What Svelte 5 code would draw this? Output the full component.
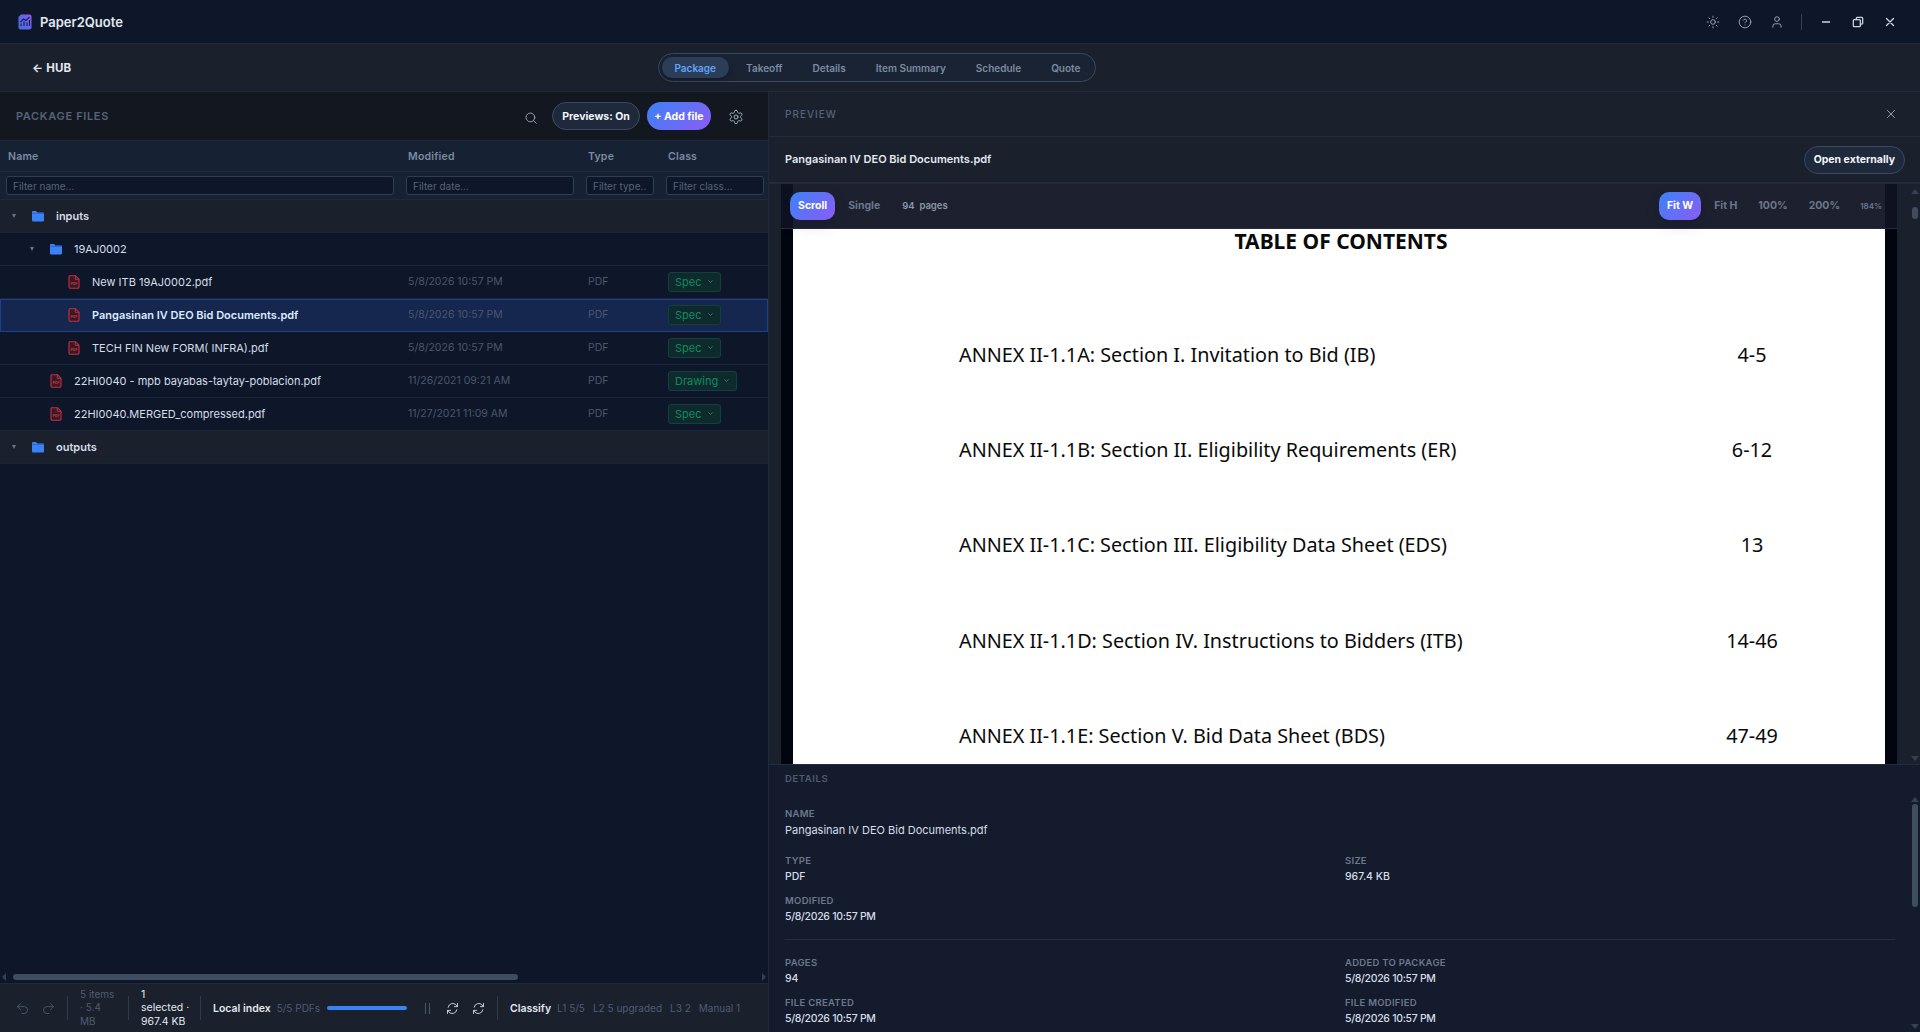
<script lang="ts">
    type FileRow = {
        kind: 'folder' | 'file'
        depth: number
        name: string
        modified?: string
        cls?: string
        selected?: boolean
        top?: boolean
    }

    const tabs = ['Package', 'Takeoff', 'Details', 'Item Summary', 'Schedule', 'Quote']

    const rows: FileRow[] = [
        { kind: 'folder', depth: 0, name: 'inputs', top: true },
        { kind: 'folder', depth: 1, name: '19AJ0002' },
        { kind: 'file', depth: 2, name: 'New ITB 19AJ0002.pdf', modified: '5/8/2026 10:57 PM', cls: 'Spec' },
        { kind: 'file', depth: 2, name: 'Pangasinan IV DEO Bid Documents.pdf', modified: '5/8/2026 10:57 PM', cls: 'Spec', selected: true },
        { kind: 'file', depth: 2, name: 'TECH FIN New FORM( INFRA).pdf', modified: '5/8/2026 10:57 PM', cls: 'Spec' },
        { kind: 'file', depth: 1, name: '22HI0040 - mpb bayabas-taytay-poblacion.pdf', modified: '11/26/2021 09:21 AM', cls: 'Drawing' },
        { kind: 'file', depth: 1, name: '22HI0040.MERGED_compressed.pdf', modified: '11/27/2021 11:09 AM', cls: 'Spec' },
        { kind: 'folder', depth: 0, name: 'outputs', top: true }
    ]

    const contents = [
        ['ANNEX II-1.1A: Section I. Invitation to Bid (IB)', '4-5'],
        ['ANNEX II-1.1B: Section II. Eligibility Requirements (ER)', '6-12'],
        ['ANNEX II-1.1C: Section III. Eligibility Data Sheet (EDS)', '13'],
        ['ANNEX II-1.1D: Section IV. Instructions to Bidders (ITB)', '14-46'],
        ['ANNEX II-1.1E: Section V. Bid Data Sheet (BDS)', '47-49']
    ]

    let activeTab = $state('Package')
</script>

<div class="app">
    <header class="titlebar">
        <div class="brand">
            <svg class="logo" viewBox="0 0 14 16" width="14" height="16">
                <defs>
                    <linearGradient id="logoFill" x1="1" y1="0" x2="0" y2="1">
                        <stop offset="0" stop-color="#8b5cf6" />
                        <stop offset="1" stop-color="#3b6fe0" />
                    </linearGradient>
                </defs>
                <path d="M3 .5h8.5a2 2 0 0 1 2 2v11a2 2 0 0 1-2 2h-9a2 2 0 0 1-2-2V3z" fill="url(#logoFill)" />
                <path d="M3 12V9.5M6 12V7.5M9 12V8.5M11.5 12V6M2.5 8l3-3 2.5 1.5L11.5 3" stroke="#13204a" stroke-width="1.1" fill="none" />
            </svg>
            <span>Paper2Quote</span>
        </div>
        <div class="win">
            <svg class="ico" viewBox="0 0 24 24"><circle cx="12" cy="12" r="4" /><path d="M12 2v2M12 20v2M4.9 4.9l1.4 1.4M17.7 17.7l1.4 1.4M2 12h2M20 12h2M4.9 19.1l1.4-1.4M17.7 6.3l1.4-1.4" /></svg>
            <svg class="ico" viewBox="0 0 24 24"><circle cx="12" cy="12" r="10" /><path d="M9.1 9a3 3 0 0 1 5.8 1c0 2-3 3-3 3M12 17h.01" /></svg>
            <svg class="ico" viewBox="0 0 24 24"><circle cx="12" cy="7" r="4" /><path d="M19 21v-2a4 4 0 0 0-4-4H9a4 4 0 0 0-4 4v2" /></svg>
            <i class="win-sep"></i>
            <svg class="ico bright" viewBox="0 0 24 24"><path d="M6 12h12" stroke-width="2.4" /></svg>
            <svg class="ico bright" viewBox="0 0 24 24"><rect x="4" y="8" width="12" height="12" rx="1.5" stroke-width="2.2" /><path d="M9 8V5.500A1.500 1.500 0 0 1 10.500 4H18.500A1.500 1.500 0 0 1 20 5.500V14A1.500 1.500 0 0 1 18.500 15.500H16" stroke-width="2.2" /></svg>
            <svg class="ico bright" viewBox="0 0 24 24"><path d="M6 6l12 12M18 6L6 18" stroke-width="2.4" /></svg>
        </div>
    </header>

    <nav class="navbar">
        <span class="hub">← HUB</span>
        <div class="tabs">
            {#each tabs as tab}
                <button class="tab" class:active={activeTab === tab} onclick={() => (activeTab = tab)}>{tab}</button>
            {/each}
        </div>
    </nav>

    <main class="body">
        <section class="files">
            <div class="files-head">
                <h2>PACKAGE FILES</h2>
                <svg class="ico search" viewBox="0 0 24 24"><circle cx="11" cy="11" r="7.500" /><path d="M21 21l-4.500-4.500" /></svg>
                <button class="pill">Previews: On</button>
                <button class="pill primary">+ Add file</button>
                <svg class="ico gear" viewBox="0 0 24 24"><path d="M12.200 2h-.4a2 2 0 0 0-2 2v.2a2 2 0 0 1-1 1.700l-.4.300a2 2 0 0 1-2 0l-.2-.1a2 2 0 0 0-2.700.7l-.2.4a2 2 0 0 0 .7 2.700l.2.100a2 2 0 0 1 1 1.700v.5a2 2 0 0 1-1 1.700l-.2.100a2 2 0 0 0-.7 2.700l.2.400a2 2 0 0 0 2.700.7l.2-.1a2 2 0 0 1 2 0l.4.300a2 2 0 0 1 1 1.700v.2a2 2 0 0 0 2 2h.4a2 2 0 0 0 2-2v-.2a2 2 0 0 1 1-1.700l.4-.3a2 2 0 0 1 2 0l.2.100a2 2 0 0 0 2.700-.7l.2-.4a2 2 0 0 0-.7-2.700l-.2-.1a2 2 0 0 1-1-1.700v-.5a2 2 0 0 1 1-1.700l.2-.1a2 2 0 0 0 .7-2.700l-.2-.4a2 2 0 0 0-2.700-.7l-.2.100a2 2 0 0 1-2 0l-.4-.3a2 2 0 0 1-1-1.700V4a2 2 0 0 0-2-2z" /><circle cx="12" cy="12" r="3" /></svg>
            </div>

            <div class="grid col-head">
                <span>Name</span>
                <span>Modified</span>
                <span>Type</span>
                <span>Class</span>
            </div>
            <div class="grid col-filter">
                <input placeholder="Filter name..." />
                <input placeholder="Filter date..." />
                <input placeholder="Filter type..." />
                <input placeholder="Filter class..." />
            </div>

            <div class="rows">
                {#each rows as row}
                    <div class="grid row" class:top={row.top} class:selected={row.selected}>
                        <div class="name depth-{row.depth}" class:nested-file={row.kind === 'file' && row.depth === 1}>
                            {#if row.kind === 'folder'}
                                <span class="caret"></span>
                                <svg class="folder" viewBox="0 0 12 12" width="12" height="12"><path d="M0 2a1 1 0 0 1 1-1h3l1.300 1.500H11a1 1 0 0 1 1 1V10.500a1 1 0 0 1-1 1H1a1 1 0 0 1-1-1z" fill="#3b82f6" /><path d="M0 3.500h12" stroke="#1d4fa8" stroke-width=".5" /></svg>
                            {:else}
                                <svg class="pdf" viewBox="0 0 12 14" width="12" height="14">
                                    <path d="M1.500.700h6L11 4.200V12a1.300 1.300 0 0 1-1.300 1.300H2.300A1.300 1.300 0 0 1 1 12V1.200z" fill="#351a2a" stroke="#c7303a" stroke-width="1.100" />
                                    <path d="M7.300.700v3.600H11" fill="none" stroke="#c7303a" stroke-width="1" />
                                    <text x="6" y="10.300" text-anchor="middle">PDF</text>
                                </svg>
                            {/if}
                            <span class="label">{row.name}</span>
                        </div>
                        {#if row.kind === 'file'}
                            <span class="muted">{row.modified}</span>
                            <span class="muted">PDF</span>
                            <span><span class="badge">{row.cls}<svg viewBox="0 0 10 10" width="7" height="7"><path d="M2 3.500L5 6.500L8 3.500" fill="none" stroke="currentColor" stroke-width="1.400" /></svg></span></span>
                        {/if}
                    </div>
                {/each}
            </div>

            <div class="hscroll">
                <i class="arrow-l"></i>
                <div class="htrack"><div class="hthumb"></div></div>
                <i class="arrow-r"></i>
            </div>

            <footer class="status">
                <svg class="ico dim" viewBox="0 0 24 24"><path d="M9 14L4 9l5-5" /><path d="M4 9h10.500a5.500 5.500 0 0 1 0 11H11" /></svg>
                <svg class="ico dim" viewBox="0 0 24 24"><path d="M15 14l5-5-5-5" /><path d="M20 9H9.500a5.500 5.500 0 0 0 0 11H13" /></svg>
                <i class="sep"></i>
                <span class="stat items">5 items · 5.4 MB</span>
                <i class="sep"></i>
                <span class="stat chosen">1<br />selected ·<br />967.4 KB</span>
                <i class="sep"></i>
                <b>Local index</b>
                <span class="stat">5/5 PDFs</span>
                <span class="progress"></span>
                <span class="pause"></span>
                <svg class="ico spin" viewBox="0 0 24 24"><path d="M5 10a7.500 7.500 0 0 1 13-3.500L20 9M20 4v5h-5" /><path d="M19 14a7.500 7.500 0 0 1-13 3.500L4 15M4 20v-5h5" /></svg>
                <svg class="ico spin" viewBox="0 0 24 24"><path d="M5 10a7.500 7.500 0 0 1 13-3.500L20 9M20 4v5h-5" /><path d="M19 14a7.500 7.500 0 0 1-13 3.500L4 15M4 20v-5h5" /></svg>
                <i class="sep"></i>
                <b>Classify</b>
                <span class="stat">L1 5/5</span>
                <span class="stat">L2 5 upgraded</span>
                <span class="stat">L3 2</span>
                <span class="stat">Manual 1</span>
            </footer>
        </section>

        <section class="preview">
            <div class="preview-head">
                <h2>PREVIEW</h2>
                <svg class="ico close" viewBox="0 0 24 24"><path d="M6 6l12 12M18 6L6 18" /></svg>
            </div>
            <div class="preview-title">
                <strong>Pangasinan IV DEO Bid Documents.pdf</strong>
                <button class="pill">Open externally</button>
            </div>

            <div class="viewer-wrap">
                <div class="viewer">
                    <div class="toolbar">
                        <button class="tool on">Scroll</button>
                        <button class="tool">Single</button>
                        <span class="pages">94&nbsp; pages</span>
                        <span class="spacer"></span>
                        <button class="tool on">Fit W</button>
                        <button class="tool">Fit H</button>
                        <button class="tool">100%</button>
                        <button class="tool">200%</button>
                        <span class="zoom">184%</span>
                    </div>
                    <div class="page">
                        <h1>TABLE OF CONTENTS</h1>
                        {#each contents as [title, range]}
                            <div class="toc"><span>{title}</span><span class="range">{range}</span></div>
                        {/each}
                    </div>
                </div>
                <div class="vscroll">
                    <i class="arrow-u"></i>
                    <div class="vtrack"><div class="vthumb small"></div></div>
                    <i class="arrow-d"></i>
                </div>
            </div>

            <div class="details">
                <div class="details-body">
                    <h3>DETAILS</h3>
                    <div class="field wide"><label>NAME</label><p class="filename">Pangasinan IV DEO Bid Documents.pdf</p></div>
                    <div class="pairs">
                        <div class="field"><label>TYPE</label><p>PDF</p></div>
                        <div class="field"><label>SIZE</label><p>967.4 KB</p></div>
                        <div class="field"><label>MODIFIED</label><p class="date">5/8/2026 10:57 PM</p></div>
                    </div>
                    <hr />
                    <div class="pairs">
                        <div class="field"><label>PAGES</label><p>94</p></div>
                        <div class="field"><label>ADDED TO PACKAGE</label><p class="date">5/8/2026 10:57 PM</p></div>
                        <div class="field"><label>FILE CREATED</label><p class="date">5/8/2026 10:57 PM</p></div>
                        <div class="field"><label>FILE MODIFIED</label><p class="date">5/8/2026 10:57 PM</p></div>
                    </div>
                </div>
                <div class="vscroll details-scroll">
                    <i class="arrow-u"></i>
                    <div class="vtrack"><div class="vthumb large"></div></div>
                    <i class="arrow-d"></i>
                </div>
            </div>
        </section>
    </main>
</div>

<style>
    :global(body) {
        margin: 0;
        background: #0e172a;
        overflow: hidden;
    }

    .app {
        display: flex;
        flex-direction: column;
        height: 1032px;
        font-family: Inter, "Liberation Sans", sans-serif;
        color: #e2e8f0;
        font-size: 11px;
    }

    button {
        font-family: inherit;
        cursor: pointer;
        white-space: nowrap;
    }

    h1, h2, h3, p {
        margin: 0;
    }

    .ico {
        width: 14px;
        height: 14px;
        fill: none;
        stroke: #a3afc0;
        stroke-width: 1.5;
        stroke-linecap: round;
        stroke-linejoin: round;
        flex: none;
    }

    .ico.bright {
        stroke: #cbd5e1;
    }

    .ico.dim {
        stroke: #475569;
    }

    /* title bar */
    .titlebar {
        height: 44px;
        flex: none;
        box-sizing: border-box;
        display: flex;
        align-items: center;
        justify-content: space-between;
        padding: 0 23px 0 18px;
        background: #0e172a;
        border-bottom: 1px solid #1e293b;
    }

    .brand {
        display: flex;
        align-items: center;
        gap: 8px;
        font-size: 13px;
        font-weight: 600;
        color: #e2e8f0;
    }

    .win {
        display: flex;
        align-items: center;
        gap: 18px;
    }

    .win-sep {
        width: 1px;
        height: 16px;
        background: #334155;
        margin: 0 -1px;
    }

    /* nav */
    .navbar {
        height: 48px;
        flex: none;
        box-sizing: border-box;
        position: relative;
        display: flex;
        align-items: center;
        justify-content: center;
        background: #1a202c;
        border-bottom: 1px solid #1e293b;
    }

    .hub {
        position: absolute;
        left: 32px;
        font-size: 11.500px;
        font-weight: 700;
        letter-spacing: .02em;
        color: #e2e8f0;
    }

    .tabs {
        display: flex;
        gap: 4px;
        padding: 3px;
        border: 1px solid #3b4a5f;
        border-radius: 15px;
        background: #1a2333;
        box-sizing: border-box;
        height: 29px;
        width: 438px;
        margin-right: 167px;
    }

    .tab {
        border: 0;
        background: none;
        padding: 0 13px;
        border-radius: 12px;
        font-size: 10px;
        font-weight: 600;
        color: #7c8ba1;
    }

    .tab.active {
        background: #2c3e57;
        color: #60a5fa;
        box-shadow: 0 2px 6px rgba(0, 0, 0, .25);
    }

    .body {
        flex: 1;
        min-height: 0;
        display: flex;
    }

    /* left panel */
    .files {
        width: 769px;
        flex: none;
        box-sizing: border-box;
        border-right: 1px solid #1e293b;
        display: flex;
        flex-direction: column;
        background: #0e172a;
    }

    .files-head {
        height: 49px;
        flex: none;
        box-sizing: border-box;
        display: flex;
        align-items: center;
        padding: 0 24px 0 16px;
        background: #13171f;
        border-bottom: 1px solid #1e293b;
    }

    .files-head h2 {
        flex: 1;
    }

    h2 {
        font-size: 11px;
        font-weight: 600;
        letter-spacing: .06em;
        color: #56627a;
    }

    .search {
        margin-right: 14px;
        margin-top: 3px;
    }

    .pill {
        height: 28px;
        box-sizing: border-box;
        padding: 0 9px;
        border-radius: 14px;
        border: 1px solid #3b4a5f;
        background: #1e293b;
        color: #f1f5f9;
        font-size: 10.500px;
        font-weight: 700;
    }

    .pill.primary {
        margin-left: 7px;
        padding: 0 7.500px;
        border: 0;
        background: linear-gradient(135deg, #3b82f6, #8b5cf6);
        color: #fff;
    }

    .gear {
        width: 16px;
        height: 16px;
        margin-left: 17px;
        margin-top: 1px;
    }

    .grid {
        display: grid;
        grid-template-columns: 400px 180px 80px 1fr;
        align-items: center;
    }

    .col-head {
        height: 31px;
        flex: none;
        box-sizing: border-box;
        padding-left: 8px;
        background: #162133;
        border-bottom: 1px solid #1e293b;
        font-size: 10.500px;
        font-weight: 600;
        color: #7c8ba1;
        letter-spacing: .02em;
    }

    .col-filter {
        height: 28px;
        flex: none;
        box-sizing: border-box;
        padding: 0 4px 0 6px;
        grid-template-columns: 388px 168px 68px 98px;
        column-gap: 12px;
        background: #162133;
        border-bottom: 1px solid #1e293b;
    }

    input {
        width: 100%;
        height: 19px;
        box-sizing: border-box;
        padding: 0 6px;
        border: 1px solid #2f3e52;
        border-radius: 3px;
        background: #0e172a;
        font-family: inherit;
        font-size: 10px;
        color: #e2e8f0;
    }

    input::placeholder {
        color: #566378;
    }

    .rows {
        flex: 1;
    }

    .row {
        height: 33px;
        box-sizing: border-box;
        padding-bottom: 1px;
        grid-template-columns: 408px 180px 80px 1fr;
        border-bottom: 1px solid #1a2638;
        background: #0e172a;
    }

    .row.top {
        background: #1a202c;
    }

    .row.top .label {
        font-weight: 600;
    }

    .row.selected {
        background: #15264f;
        box-shadow: inset 0 0 0 1px #1e3f8f;
        border-bottom: 0;
        padding-bottom: 2px;
    }

    .row.selected .label {
        color: #dbeafe;
        font-weight: 600;
    }

    .name {
        display: flex;
        align-items: center;
    }

    .depth-0 {
        padding-left: 12px;
    }

    .depth-1 {
        padding-left: 30px;
    }

    .depth-1.nested-file {
        padding-left: 50px;
    }

    .depth-2 {
        padding-left: 68px;
    }

    .caret {
        width: 0;
        height: 0;
        border: 2.500px solid transparent;
        border-top: 4px solid #64748b;
        border-bottom: 0;
        margin-right: 16px;
    }

    .label {
        font-size: 11px;
        color: #d5dde8;
        margin-left: 12px;
        white-space: nowrap;
    }

    .pdf {
        flex: none;
    }

    .pdf text {
        font-family: Inter, sans-serif;
        font-size: 3.500px;
        font-weight: 700;
        fill: #c7303a;
    }

    .muted {
        font-size: 10.500px;
        color: #4a566b;
    }

    .badge {
        display: inline-flex;
        align-items: center;
        gap: 5px;
        height: 20px;
        box-sizing: border-box;
        padding: 0 6px;
        border: 1px solid #14403c;
        border-radius: 3px;
        background: #0e2a2d;
        color: #0f8a60;
        font-size: 11px;
    }

    .hscroll {
        height: 14px;
        flex: none;
        box-sizing: border-box;
        display: flex;
        align-items: center;
        padding: 1px 2px 0;
    }

    .htrack {
        flex: 1;
        padding: 0 7px;
    }

    .hthumb {
        width: 505px;
        height: 6px;
        border-radius: 3px;
        background: #3f4d61;
    }

    .arrow-l, .arrow-r, .arrow-u, .arrow-d {
        width: 0;
        height: 0;
        display: block;
        flex: none;
        border: 4px solid transparent;
    }

    .arrow-l {
        border-left: 0;
        border-right: 4px solid #334155;
    }

    .arrow-r {
        border-right: 0;
        border-left: 4px solid #334155;
    }

    .arrow-u {
        border-top: 0;
        border-bottom: 5px solid #334155;
    }

    .arrow-d {
        border-bottom: 0;
        border-top: 5px solid #334155;
    }

    /* status */
    .status {
        height: 49px;
        flex: none;
        box-sizing: border-box;
        display: flex;
        align-items: center;
        padding-left: 15px;
        background: #1a202c;
        border-top: 1px solid #1e293b;
        font-size: 10.500px;
    }

    .status .ico {
        width: 15px;
        height: 15px;
        margin-right: 11px;
    }

    .sep {
        width: 1px;
        height: 24px;
        background: #2f3b4d;
        margin-right: 12px;
    }

    .stat {
        color: #4f5c72;
        font-size: 10px;
        margin-right: 8px;
        white-space: nowrap;
    }

    .items {
        width: 36px;
        white-space: normal;
        line-height: 13.500px;
        margin-right: 12px;
    }

    .chosen {
        width: 50px;
        font-size: 10.500px;
        line-height: 13.500px;
        color: #e2e8f0;
        margin-right: 9px;
    }

    .status b {
        font-weight: 600;
        color: #e2e8f0;
        margin-right: 6px;
    }

    .progress {
        width: 80px;
        height: 4px;
        border-radius: 2px;
        background: #3b82f6;
        margin: 0 18px 0 -1px;
    }

    .pause {
        width: 5px;
        height: 11px;
        border-left: 1px solid #475569;
        border-right: 1px solid #475569;
        box-sizing: border-box;
        margin-right: 15px;
    }

    .status .spin {
        stroke: #cbd5e1;
        margin-right: 11px;
    }

    /* right panel */
    .preview {
        flex: 1;
        min-width: 0;
        display: flex;
        flex-direction: column;
        background: #1a202c;
    }

    .preview-head {
        height: 45px;
        flex: none;
        box-sizing: border-box;
        display: flex;
        align-items: center;
        justify-content: space-between;
        padding: 0 22px 0 16px;
        border-bottom: 1px solid #232c3b;
    }

    .preview-head h2 {
        font-size: 10px;
        letter-spacing: .1em;
        font-weight: 500;
    }

    .preview-title {
        height: 47px;
        flex: none;
        box-sizing: border-box;
        display: flex;
        align-items: center;
        justify-content: space-between;
        padding: 0 15px 2px 16px;
        border-bottom: 2px solid #232c3b;
    }

    .preview-title strong {
        font-size: 11px;
        font-weight: 600;
        color: #e2e8f0;
    }

    .preview-title .pill {
        margin-top: 2px;
    }

    .viewer-wrap {
        height: 580px;
        flex: none;
        display: flex;
        padding-left: 12px;
    }

    .viewer {
        flex: 1;
        position: relative;
        overflow: hidden;
        background: #01050f;
        padding: 0 12px;
        min-width: 0;
    }

    .toolbar {
        position: absolute;
        top: 0;
        left: 0;
        right: 0;
        height: 45px;
        box-sizing: border-box;
        display: flex;
        align-items: center;
        gap: 5px;
        padding: 0 15px 1px 9px;
        background: rgba(14, 18, 34, .94);
        border-bottom: 1px solid #232c3b;
    }

    .tool {
        height: 28px;
        box-sizing: border-box;
        border: 0;
        border-radius: 10px;
        padding: 0 8px;
        background: none;
        color: #6b778c;
        font-size: 10.500px;
        font-weight: 700;
    }

    .tool.on {
        background: linear-gradient(135deg, #3b82f6, #8b5cf6);
        color: #fff;
        box-shadow: 0 6px 16px rgba(0, 0, 0, .1);
    }

    .pages {
        font-size: 9.500px;
        font-weight: 600;
        color: #8b96a8;
        margin-left: 9px;
    }

    .spacer {
        flex: 1;
    }

    .zoom {
        font-size: 8px;
        font-weight: 600;
        color: #6b778c;
        margin-left: 7px;
    }

    .page {
        background: #fff;
        height: 100%;
        padding: 44px 89px 0 166px;
        color: #0a0a0a;
        font-family: "Noto Sans", "DejaVu Sans", sans-serif;
    }

    .page h1 {
        font-size: 21px;
        font-weight: 700;
        text-align: center;
        margin: 0 16px 0 -57px;
        line-height: 24px;
        padding-top: 1px;
        height: 112px;
    }

    .toc {
        display: flex;
        justify-content: space-between;
        height: 95.200px;
        font-size: 19.800px;
        line-height: 28px;
    }

    .range {
        width: 88px;
        text-align: center;
    }

    .vscroll {
        width: 23px;
        flex: none;
        display: flex;
        flex-direction: column;
        align-items: center;
        padding: 5px 0 3px 13px;
        box-sizing: border-box;
    }

    .vtrack {
        flex: 1;
    }

    .vthumb {
        width: 6px;
        border-radius: 3px;
        background: #3f4d61;
    }

    .vthumb.small {
        height: 12px;
        margin-top: 13px;
    }

    .vthumb.large {
        height: 103px;
        margin-top: 2px;
    }

    /* details */
    .details {
        flex: 1;
        min-height: 0;
        display: flex;
        background: #141b2c;
        border-top: 1px solid #232c3b;
    }

    .details-body {
        flex: 1;
        padding: 8px 2px 0 16px;
        min-width: 0;
    }

    .details h3 {
        font-size: 9.500px;
        font-weight: 600;
        letter-spacing: .06em;
        color: #4f5c72;
        height: 35px;
    }

    .field label {
        display: block;
        font-size: 9.500px;
        font-weight: 600;
        letter-spacing: .03em;
        line-height: 12px;
        color: #6c788d;
    }

    .field p {
        font-size: 10.500px;
        font-weight: 500;
        line-height: 14px;
        margin-top: 3px;
        color: #d5dde8;
    }

    .field .filename {
        font-size: 11px;
        font-weight: 400;
    }

    .field .date {
        letter-spacing: -.03em;
    }

    .wide {
        height: 47px;
    }

    .pairs {
        display: grid;
        grid-template-columns: 560px 1fr;
        row-gap: 11px;
    }

    hr {
        border: 0;
        border-top: 1px solid #222d3d;
        margin: 15px 0 17px;
    }

    .details-scroll {
        padding-top: 32px;
    }
</style>
